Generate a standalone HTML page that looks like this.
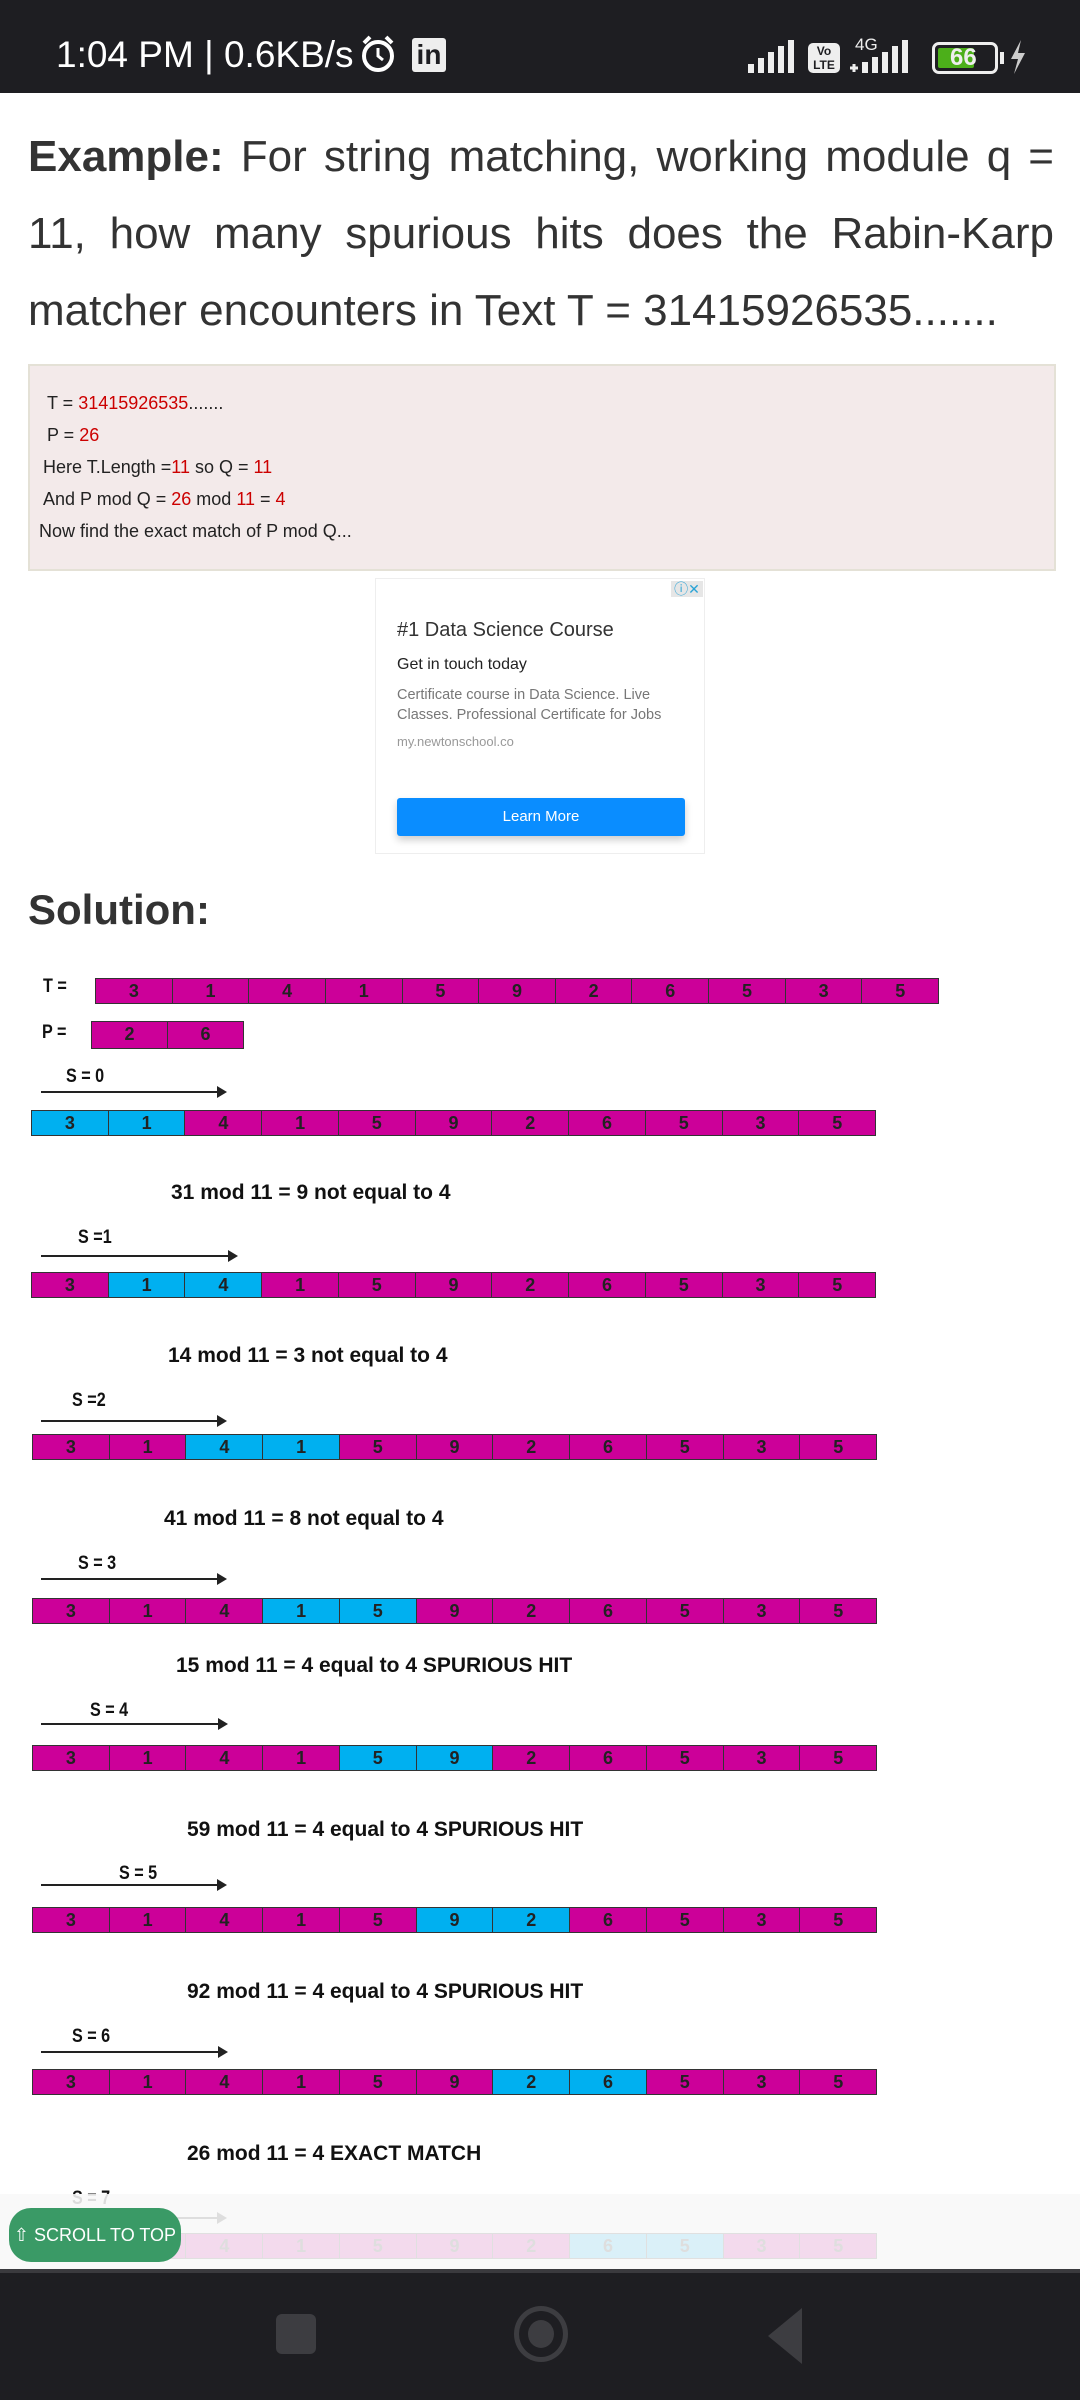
<!DOCTYPE html>
<html><head><meta charset="utf-8"><style>
*{margin:0;padding:0;box-sizing:border-box}
body{width:1080px;height:2400px;background:#fff;position:relative;overflow:hidden;font-family:"Liberation Sans",sans-serif}
.a{position:absolute}
.sb{left:0;top:0;width:1080px;height:93px;background:#1e1e22}
.h{left:28px;top:118px;width:1026px;font-size:44px;line-height:77px;color:#333;text-align:justify}
.box{left:28px;top:364px;width:1028px;height:207px;background:#f3eaea;border:2px solid #e4e1d6}
.bl{font-size:18px;color:#222;position:absolute;white-space:nowrap}
.r{color:#c00}
.row{position:absolute;display:flex;height:26px;border:1px solid #333}
.row div{flex:1;background:#cc0099;border-right:1px solid #333;text-align:center;font:bold 18px/24px "Liberation Sans",sans-serif;color:#222}
.row div:last-child{border-right:none}
.row div.b{background:#00b0f0}
.lab{position:absolute;font:bold 19px "Liberation Sans",sans-serif;color:#111;transform:scaleX(.85) translateY(-50%);transform-origin:left center;white-space:nowrap}
.txt{position:absolute;font:bold 21px "Liberation Sans",sans-serif;color:#111;transform:translateY(-50%);white-space:nowrap}
.arr{position:absolute;height:2px;background:#222}
.arr:after{content:"";position:absolute;right:-4px;top:-5px;border-left:10px solid #222;border-top:6px solid transparent;border-bottom:6px solid transparent}
</style></head><body>
<div class="a sb"></div>
<div class="a" style="left:56px;top:34px;font-size:37px;color:#fff;white-space:nowrap">1:04 PM | 0.6KB/s</div>
<svg class="a" style="left:358px;top:33px" width="40" height="42" viewBox="0 0 40 42"><circle cx="20" cy="23" r="14" fill="none" stroke="#fff" stroke-width="4"/><path d="M20 15v8l5 4" stroke="#fff" stroke-width="3" fill="none"/><path d="M6 10l6-6M34 10l-6-6" stroke="#fff" stroke-width="4"/></svg>
<div class="a" style="left:412px;top:38px;width:34px;height:34px;background:#eee;border-radius:3px;color:#1e1e22;font:bold 28px/34px 'Liberation Sans';text-align:center">in</div>
<svg class="a" style="left:748px;top:40px" width="48" height="34"><rect x="0" y="24" width="6" height="9" fill="#eee"/><rect x="10" y="18" width="6" height="15" fill="#eee"/><rect x="20" y="12" width="6" height="21" fill="#eee"/><rect x="30" y="6" width="6" height="27" fill="#eee"/><rect x="40" y="0" width="6" height="33" fill="#eee"/></svg>
<div class="a" style="left:808px;top:43px;width:32px;height:30px;background:#eee;border-radius:5px;color:#1e1e22;font:bold 12px/14px 'Liberation Sans';text-align:center;padding-top:1px">Vo<br>LTE</div>
<div class="a" style="left:855px;top:35px;font-size:17px;color:#eee">4G</div>
<svg class="a" style="left:850px;top:40px" width="70" height="34"><rect x="12" y="22" width="6" height="11" fill="#eee"/><rect x="22" y="17" width="6" height="16" fill="#eee"/><rect x="32" y="12" width="6" height="21" fill="#eee"/><rect x="42" y="6" width="6" height="27" fill="#eee"/><rect x="52" y="0" width="6" height="33" fill="#eee"/><path d="M0 28h8M4 24v8" stroke="#eee" stroke-width="3"/></svg>
<div class="a" style="left:932px;top:42px;width:66px;height:32px;border:3px solid #eee;border-radius:7px;padding:3px"><div style="width:36px;height:20px;background:#4caf1a;border-radius:2px"></div></div>
<div class="a" style="left:950px;top:42px;font:bold 24px/32px 'Liberation Sans';color:#eee">66</div>
<div class="a" style="left:1000px;top:52px;width:4px;height:12px;background:#eee"></div>
<svg class="a" style="left:1008px;top:40px" width="20" height="34"><path d="M13 0L3 19h7L6 34 17 13h-7z" fill="#ccc"/></svg>

<div class="a h"><b>Example:</b> For string matching, working module q = 11, how many spurious hits does the Rabin-Karp matcher encounters in Text T = 31415926535.......</div>

<div class="a box">
<div class="bl" style="left:17px;top:27px">T = <span class="r">31415926535</span>.......</div>
<div class="bl" style="left:17px;top:59px">P = <span class="r">26</span></div>
<div class="bl" style="left:13px;top:91px">Here T.Length =<span class="r">11</span> so Q = <span class="r">11</span></div>
<div class="bl" style="left:13px;top:123px">And P mod Q = <span class="r">26</span> mod <span class="r">11</span> = <span class="r">4</span></div>
<div class="bl" style="left:9px;top:155px">Now find the exact match of P mod Q...</div>
</div>

<div class="a" style="left:375px;top:578px;width:330px;height:276px;border:1px solid #eee;background:#fff">
<div class="a" style="right:1px;top:2px;width:32px;height:16px;background:#e6e6e6;font-size:14px;line-height:16px;color:#29a3d6;text-align:center">ⓘ✕</div>
<div class="a" style="left:21px;top:40px;font-size:20px;color:#333">#1 Data Science Course</div>
<div class="a" style="left:21px;top:77px;font-size:16px;color:#222">Get in touch today</div>
<div class="a" style="left:21px;top:106px;font-size:14.5px;line-height:20px;color:#777;width:290px">Certificate course in Data Science. Live Classes. Professional Certificate for Jobs</div>
<div class="a" style="left:21px;top:155px;font-size:13px;color:#999">my.newtonschool.co</div>
<div class="a" style="left:21px;top:219px;width:288px;height:38px;background:#0a8dff;border-radius:3px;color:#fff;font-size:15px;line-height:38px;text-align:center;box-shadow:0 4px 8px rgba(0,0,0,.2)">Learn More</div>
</div>

<div class="a" style="left:28px;top:886px;font:bold 42px 'Liberation Sans';color:#333">Solution:</div>

<div class="lab" style="left:43px;top:987px">T =</div>
<div class="row" style="left:95px;top:978px;width:844px"><div>3</div><div>1</div><div>4</div><div>1</div><div>5</div><div>9</div><div>2</div><div>6</div><div>5</div><div>3</div><div>5</div></div>
<div class="lab" style="left:42px;top:1033px">P =</div>
<div class="row" style="left:91px;top:1021px;width:153px;height:28px"><div>2</div><div>6</div></div>

<div class="lab" style="left:66px;top:1077px">S = 0</div>
<div class="arr" style="left:41px;top:1091px;width:182px"></div>
<div class="row" style="left:31px;top:1110px;width:845px"><div class="b">3</div><div class="b">1</div><div>4</div><div>1</div><div>5</div><div>9</div><div>2</div><div>6</div><div>5</div><div>3</div><div>5</div></div>
<div class="txt" style="left:171px;top:1193px">31 mod 11 = 9 not equal to 4</div>

<div class="lab" style="left:78px;top:1238px">S =1</div>
<div class="arr" style="left:41px;top:1255px;width:193px"></div>
<div class="row" style="left:31px;top:1272px;width:845px"><div>3</div><div class="b">1</div><div class="b">4</div><div>1</div><div>5</div><div>9</div><div>2</div><div>6</div><div>5</div><div>3</div><div>5</div></div>
<div class="txt" style="left:168px;top:1356px">14 mod 11 = 3 not equal to 4</div>

<div class="lab" style="left:72px;top:1401px">S =2</div>
<div class="arr" style="left:41px;top:1420px;width:182px"></div>
<div class="row" style="left:32px;top:1434px;width:845px"><div>3</div><div>1</div><div class="b">4</div><div class="b">1</div><div>5</div><div>9</div><div>2</div><div>6</div><div>5</div><div>3</div><div>5</div></div>
<div class="txt" style="left:164px;top:1519px">41 mod 11 = 8 not equal to 4</div>

<div class="lab" style="left:78px;top:1564px">S = 3</div>
<div class="arr" style="left:41px;top:1578px;width:182px"></div>
<div class="row" style="left:32px;top:1598px;width:845px"><div>3</div><div>1</div><div>4</div><div class="b">1</div><div class="b">5</div><div>9</div><div>2</div><div>6</div><div>5</div><div>3</div><div>5</div></div>
<div class="txt" style="left:176px;top:1666px">15 mod 11 = 4 equal to 4 SPURIOUS HIT</div>

<div class="lab" style="left:90px;top:1711px">S = 4</div>
<div class="arr" style="left:41px;top:1723px;width:183px"></div>
<div class="row" style="left:32px;top:1745px;width:845px"><div>3</div><div>1</div><div>4</div><div>1</div><div class="b">5</div><div class="b">9</div><div>2</div><div>6</div><div>5</div><div>3</div><div>5</div></div>
<div class="txt" style="left:187px;top:1830px">59 mod 11 = 4 equal to 4 SPURIOUS HIT</div>

<div class="lab" style="left:119px;top:1874px">S = 5</div>
<div class="arr" style="left:41px;top:1884px;width:182px"></div>
<div class="row" style="left:32px;top:1907px;width:845px"><div>3</div><div>1</div><div>4</div><div>1</div><div>5</div><div class="b">9</div><div class="b">2</div><div>6</div><div>5</div><div>3</div><div>5</div></div>
<div class="txt" style="left:187px;top:1992px">92 mod 11 = 4 equal to 4 SPURIOUS HIT</div>

<div class="lab" style="left:72px;top:2037px">S = 6</div>
<div class="arr" style="left:41px;top:2051px;width:183px"></div>
<div class="row" style="left:32px;top:2069px;width:845px"><div>3</div><div>1</div><div>4</div><div>1</div><div>5</div><div>9</div><div class="b">2</div><div class="b">6</div><div>5</div><div>3</div><div>5</div></div>
<div class="txt" style="left:187px;top:2154px">26 mod 11 = 4 EXACT MATCH</div>

<div class="lab" style="left:72px;top:2199px">S = 7</div>
<div class="arr" style="left:41px;top:2217px;width:182px"></div>
<div class="row" style="left:32px;top:2233px;width:845px"><div>3</div><div>1</div><div>4</div><div>1</div><div>5</div><div>9</div><div>2</div><div class="b">6</div><div class="b">5</div><div>3</div><div>5</div></div>

<div class="a" style="left:0;top:2194px;width:1080px;height:75px;background:rgba(248,248,248,.88)"></div>
<div class="a" style="left:9px;top:2208px;width:172px;height:54px;background:#3a9a66;border-radius:22px;color:#fff;font-size:18px;line-height:54px;text-align:center;white-space:nowrap">⇧ SCROLL TO TOP</div>

<div class="a" style="left:0;top:2269px;width:1080px;height:131px;background:#1e1e22;border-top:4px solid #3a3a3e"></div>
<div class="a" style="left:276px;top:2314px;width:40px;height:40px;background:#3d3d41;border-radius:6px"></div>
<div class="a" style="left:514px;top:2306px;width:54px;height:56px;border:5px solid #3d3d41;border-radius:50%"></div>
<div class="a" style="left:528px;top:2320px;width:26px;height:28px;background:#3d3d41;border-radius:50%"></div>
<svg class="a" style="left:764px;top:2306px" width="40" height="60"><path d="M38 2L4 30l34 28z" fill="#3d3d41"/></svg>
</body></html>
